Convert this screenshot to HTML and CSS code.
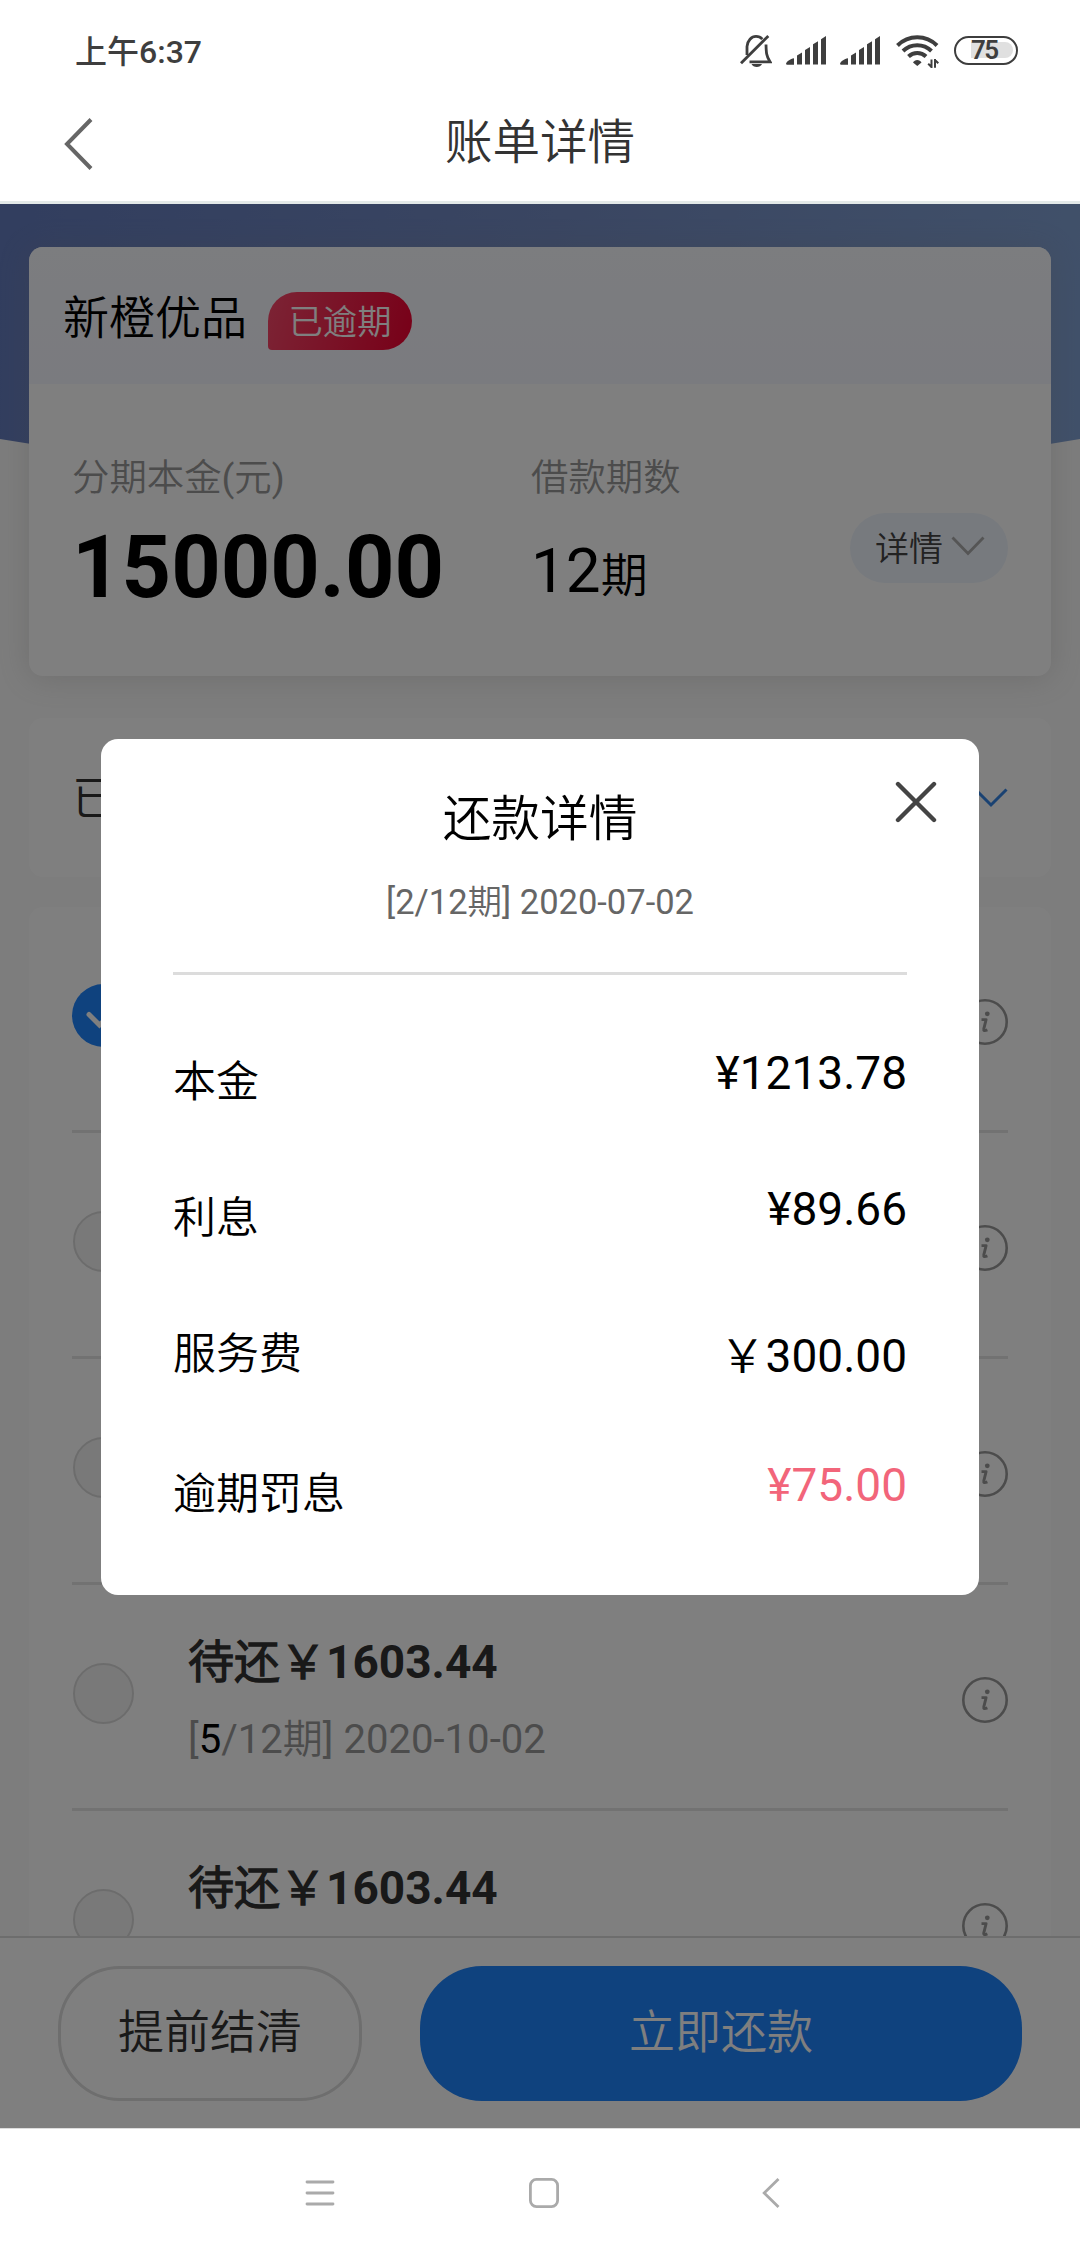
FILE: index.html
```html
<!DOCTYPE html>
<html lang="zh-CN">
<head>
<meta charset="utf-8">
<title>账单详情</title>
<link rel="stylesheet" href="styles.css">
</head>
<body>
<svg class="defs" width="0" height="0" aria-hidden="true">
  <symbol id="info" viewBox="0 0 46 46">
    <circle cx="23" cy="23" r="21.7" fill="none" stroke="currentColor" stroke-width="2.6"/>
    <circle cx="25.3" cy="14.8" r="2.4" fill="currentColor"/>
    <path d="M19.5 20.6h4.6l-2.3 9.2c-.4 1.9.5 2.4 3.6 1.1" fill="none" stroke="currentColor" stroke-width="2.9" stroke-linejoin="round"/>
  </symbol>
  <symbol id="signal" viewBox="0 0 40 29">
    <path d="M0 28.2c0-2.6 4.600-5.600 8-6v6.500H1.200zM11 19.500l5-3v12h-5zM19 14l5-3v17.500h-5zM27 8.300l5-3v23.200h-5zM35 3.200l5-3.200v28.500h-5z" fill="currentColor"/>
  </symbol>
</svg>

<div class="phone">
  <div class="status">
    <span class="clock">上午6:37</span>
    <div class="status-icons">
      <svg class="bell" width="32" height="33" viewBox="0 0 32 33" fill="none" stroke="currentColor" stroke-width="2.800">
        <path d="M7 20V11.500C7.500 5.500 11.500 1.400 16 1.400c2.600 0 4.800 1 6.300 2.700M26 9.500c.2 8 .3 11.500 4 17.300H9.500"/>
        <path d="M28.300 1 1 28.300"/>
        <path d="M11.500 29h10.500c-1.600 4-8.900 4-10.500 0z" fill="currentColor" stroke="none"/>
      </svg>
      <svg class="signal" width="40" height="29"><use href="#signal"/></svg>
      <svg class="signal second" width="40" height="29"><use href="#signal"/></svg>
      <svg class="wifi" width="43" height="34" viewBox="0 0 43 34" fill="none" stroke="currentColor" stroke-width="4">
        <path d="M1.500 10.500c11-11 28.500-11 39.500 0M7 16c8-7.800 20.500-7.800 28.500 0M12.500 21.500c5-4.700 12.500-4.700 17.500 0"/>
        <path d="M21.300 31l-4.300-3.500c1.500-3.500 7-3.500 8.500 0z" fill="currentColor" stroke="none"/>
        <path d="M35.500 33V24.500M39 24v8.800M35.500 32l-3.300-3.200M39 25l3.300 3.200" stroke-width="2"/>
      </svg>
      <div class="battery"><span class="battery-level">75</span></div>
    </div>
  </div>

  <header class="titlebar">
    <svg class="back" width="30" height="54" viewBox="0 0 30 54" fill="none" stroke="currentColor" stroke-width="4"><path d="M27 2.500 3 27l24 24.500"/></svg>
    <h1>账单详情</h1>
  </header>

  <main class="screen">
    <div class="hero"></div>
    <div class="content">
      <section class="card summary">
        <div class="summary-head">
          <span class="merchant">新橙优品</span>
          <span class="badge">已逾期</span>
        </div>
        <div class="summary-body">
          <div>
            <div class="label">分期本金(元)</div>
            <div class="principal">15000.00</div>
          </div>
          <div>
            <div class="label">借款期数</div>
            <div class="periods">12<small>期</small></div>
          </div>
          <div class="more">详情
            <svg width="34" height="20" viewBox="0 0 34 20" fill="none" stroke="currentColor" stroke-width="2.800"><path d="M1.500 1.500 17 17.500 32.500 1.500"/></svg>
          </div>
        </div>
      </section>

      <section class="card paid">
        <span class="paid-title">已还</span>
        <svg width="34" height="20" viewBox="0 0 34 20" fill="none" stroke="currentColor" stroke-width="3"><path d="M1.500 1.500 17 17 32.500 1.500"/></svg>
      </section>

      <section class="card plan">
        <div class="row">
          <span class="radio checked"><svg width="32" height="22" viewBox="0 0 32 22" fill="none" stroke="currentColor" stroke-width="5" stroke-linecap="round"><path d="M3 5.500 13.500 16 27 3"/></svg></span>
          <svg class="info" width="46" height="46"><use href="#info"/></svg>
        </div>
        <div class="row">
          <span class="radio"></span>
          <svg class="info" width="46" height="46"><use href="#info"/></svg>
        </div>
        <div class="row">
          <span class="radio"></span>
          <svg class="info" width="46" height="46"><use href="#info"/></svg>
        </div>
        <div class="row">
          <span class="radio"></span>
          <div class="due">
            <div class="due-amount">待还￥1603.44</div>
            <div class="due-date">[<b>5</b>/12期] 2020-10-02</div>
          </div>
          <svg class="info" width="46" height="46"><use href="#info"/></svg>
        </div>
        <div class="row">
          <span class="radio"></span>
          <div class="due">
            <div class="due-amount">待还￥1603.44</div>
          </div>
          <svg class="info" width="46" height="46"><use href="#info"/></svg>
        </div>
      </section>
    </div>

    <footer class="actions">
      <div class="btn settle">提前结清</div>
      <div class="btn repay">立即还款</div>
    </footer>

    <div class="mask">
      <div class="modal">
        <svg class="close" width="42" height="42" viewBox="0 0 42 42" fill="none" stroke="currentColor" stroke-width="4.400" stroke-linecap="round"><path d="M3 3l36 36M39 3 3 39"/></svg>
        <h2>还款详情</h2>
        <p class="period">[2/12期] 2020-07-02</p>
        <dl class="fees">
          <div class="fee"><dt>本金</dt><dd>¥1213.78</dd></div>
          <div class="fee"><dt>利息</dt><dd>¥89.66</dd></div>
          <div class="fee service"><dt>服务费</dt><dd>￥300.00</dd></div>
          <div class="fee penalty"><dt>逾期罚息</dt><dd>¥75.00</dd></div>
        </dl>
      </div>
    </div>
  </main>

  <nav class="navbar">
    <svg width="30" height="30" viewBox="0 0 30 30" fill="none" stroke="currentColor" stroke-width="2.800" stroke-linecap="round"><path d="M2 4h26M2 15h26M2 26h26"/></svg>
    <svg class="home" width="30" height="30" viewBox="0 0 30 30" fill="none" stroke="currentColor" stroke-width="2.800"><rect x="1.400" y="1.400" width="27.200" height="27.200" rx="6"/></svg>
    <svg width="18" height="30" viewBox="0 0 18 30" fill="none" stroke="currentColor" stroke-width="2.800"><path d="M16.500 1 2.200 15l14.300 14"/></svg>
  </nav>
</div>
</body>
</html>
```

FILE: styles.css
```css
* { box-sizing: border-box; margin: 0; padding: 0; }

body {
  font-family: Roboto, "Noto Sans CJK SC DemiLight", "Noto Sans CJK SC", sans-serif;
  color: #333;
  background: #fff;
}

svg { display: block; flex: none; }
.defs { position: absolute; }

.phone {
  width: 1080px;
  height: 2258px;
  display: flex;
  flex-direction: column;
  overflow: hidden;
  background: #fff;
}

/* status bar */
.status {
  height: 80px;
  padding: 0 62px 0 75px;
  display: flex;
  justify-content: space-between;
  color: #3e3e3e;
}
.clock {
  margin-top: 32px;
  font-family: Roboto, "Noto Sans CJK SC", sans-serif;
  font-size: 32px;
  line-height: 40px;
  font-weight: 500;
}
.status-icons { display: flex; align-items: flex-start; padding-top: 36px; }
.bell { margin-top: -1px; }
.signal { margin-left: 14px; }
.wifi { margin-left: 16px; margin-top: -1px; }
.battery {
  width: 64px;
  height: 29px;
  margin-left: 15px;
  padding: 4px 4px 4px 15px;
  border: 2.500px solid #3e3e3e;
  border-radius: 15px;
}
.battery-level {
  display: block;
  height: 16px;
  margin-right: -1px;
  border-radius: 0 8px 8px 0;
  background: #e0e0e0;
  font-size: 26px;
  line-height: 17px;
  font-weight: 600;
  letter-spacing: -1.500px;
}

/* title bar */
.titlebar {
  height: 124px;
  border-bottom: 3px solid #e3e9e8;
  padding: 0 64px;
  display: grid;
  grid-template-columns: 30px 1fr 30px;
}
.back { margin-top: 37px; color: #666; }
h1 { font-size: 47.500px; font-weight: 400; line-height: 60px; margin-top: 33px; text-align: center; }

/* bill screen */
.screen { position: relative; height: 1924px; background: #fafafa; overflow: hidden; }
.hero {
  position: absolute;
  inset: 0 0 auto;
  height: 300px;
  background: linear-gradient(97deg, #647cbe, #748cc4 50%, #82a2d4);
  clip-path: path("M0 0H1080V235Q540 327 0 235Z");
}
.content { position: relative; height: 1732px; padding: 43px 29px 0; overflow: hidden; }
.card { background: #fff; border-radius: 14px; }

.summary { height: 429px; box-shadow: 0 2px 30px rgba(140, 135, 130, .24); }
.summary-head {
  height: 137px;
  padding: 0 34px;
  display: flex;
  gap: 21px;
  border-radius: 14px 14px 0 0;
  background: linear-gradient(#f8fafe, #f5f6fe);
}
.merchant { margin-top: 41px; font-size: 46px; line-height: 60px; color: #000; }
.badge {
  width: 144px;
  height: 58px;
  margin-top: 45px;
  border-radius: 29px 29px 29px 4px;
  background: linear-gradient(105deg, #f8486a, #f00030);
  color: #fff;
  font-size: 34.300px;
  line-height: 60px;
  text-align: center;
}
.summary-body { padding: 0 43px; display: grid; grid-template-columns: 459px 319px 158px; }
.label { margin-top: 69px; font-size: 37.400px; line-height: 50px; color: #999; }
.principal { margin-top: 20px; font-size: 86.400px; line-height: 90px; font-weight: 700; color: #000; }
.periods { margin-top: 23px; font-size: 62px; line-height: 90px; color: #000; }
.periods small { font-size: 47px; }
.more {
  display: flex;
  align-items: center;
  justify-content: space-between;
  height: 70px;
  margin-top: 129px;
  padding: 0 23px 4px 25px;
  border-radius: 35px;
  background: #eff5fd;
  font-size: 34px;
  white-space: nowrap;
  color: #444;
}
.more svg { color: #aaa; }

.paid {
  height: 159px;
  margin-top: 42px;
  padding: 0 43px;
  display: flex;
  align-items: center;
  justify-content: space-between;
  font-size: 46px;
}
.paid-title { padding: 0 0 8px 0; }
.paid svg { color: #3484e4; }

.plan { margin-top: 30px; padding: 0 43px; }
.row { display: flex; height: 226px; border-bottom: 3px solid #e5e5e5; }
.radio {
  flex: none;
  width: 61px;
  height: 61px;
  margin: 78px 54px 0 1px;
  border: 2.500px solid #d9d9d9;
  border-radius: 50%;
  background: #f3f3f3;
}
.radio.checked {
  width: 63px;
  height: 63px;
  margin: 77px 54px 0 0;
  padding: 25px 0 0 14px;
  border: 0;
  background: #1f84fc;
  color: #fff;
}
.due-amount { margin-top: 47px; font-size: 46px; line-height: 60px; font-weight: 700; }
.due-date { margin-top: 18px; font-size: 40.100px; line-height: 60px; color: #999; }
.due-date b { font-weight: 400; color: #000; }
.info { margin: 92px 0 0 auto; color: #999; }

.actions {
  position: relative;
  height: 192px;
  padding: 28px 58px 0;
  display: flex;
  justify-content: space-between;
  border-top: 2px solid #dadada;
  background: #fff;
}
.btn { height: 135px; border-radius: 62px; font-size: 46px; line-height: 132px; text-align: center; }
.settle { width: 304px; border: 3px solid #dcdcdc; line-height: 126px; }
.repay { width: 602px; background: #1f84fc; color: #fff; }

/* repayment dialog */
.mask {
  position: absolute;
  inset: 0;
  padding: 535px 101px 0;
  background: rgba(0, 0, 0, .5);
}
.modal {
  position: relative;
  height: 856px;
  padding: 49px 72px 0;
  border-radius: 17px;
  background: #fff;
  color: #000;
}
.close { position: absolute; top: 42px; right: 42px; color: #444; }
h2 { font-size: 48.700px; font-weight: 400; line-height: 64px; text-align: center; }
.period { margin-top: 30px; font-size: 34.500px; line-height: 40px; text-align: center; color: #666; }
.fees { margin-top: 50px; padding-top: 77px; border-top: 3px solid #dcdcdc; }
.fee { display: flex; justify-content: space-between; height: 136px; line-height: 60px; }
.fee dt { font-size: 43px; }
.fee dd { font-size: 46px; margin-top: -9px; }
.fee.service dd { margin-top: 2px; }
.fee.penalty { padding-top: 4px; }
.fee.penalty dd { color: #f2657a; }

/* system navigation */
.navbar {
  height: 130px;
  padding: 49px 300px 0 305px;
  border-top: 1px solid #ddd;
  display: flex;
  justify-content: space-between;
  color: #aaa;
}
.home { margin-right: 9px; }
```
